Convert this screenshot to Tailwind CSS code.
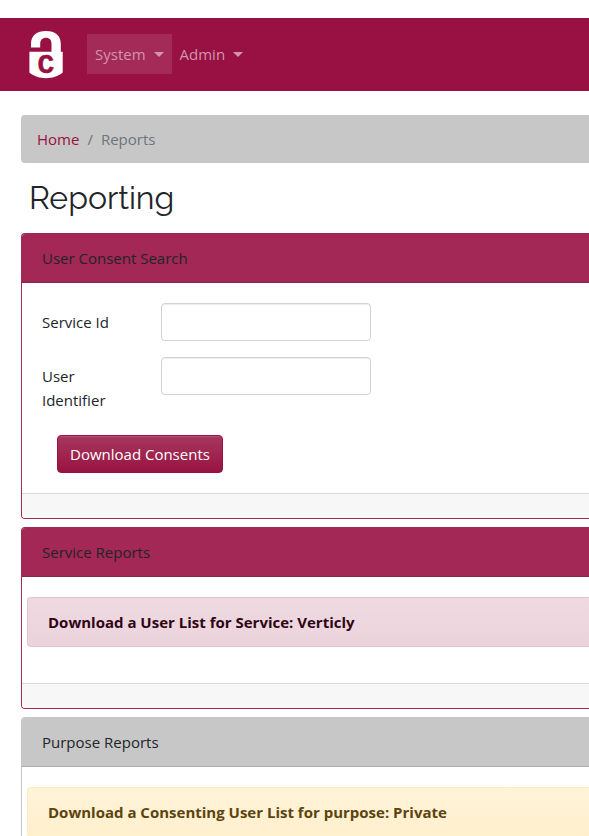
<!DOCTYPE html>
<html lang="en">
<head>
<meta charset="utf-8">
<meta name="viewport" content="width=device-width, initial-scale=1">
<title>Reporting</title>
<script src="https://cdn.jsdelivr.net/npm/@tailwindcss/browser@4"></script>
</head>
<body class="h-screen overflow-hidden bg-white pt-[18px] font-['Open_Sans','Noto_Sans',sans-serif] text-[15px] leading-6 text-[#212529]">
  <header class="flex items-center bg-[#981142] pt-3 pb-[13px] pl-[29px]">
    <a href="#" aria-label="Home" class="mr-6">
      <svg class="block h-12 w-[34px] overflow-visible" viewBox="0 -1 34 48" aria-hidden="true">
        <path fill="#fff" d="M2 16.500V13C2 4 8 0 17 0S31.800 4 31.800 13V20.800H33.700V41.500C29 45.500 23 47.200 17 47.200S5 45.500 .4 41.500V20.800H22.500V13C22.500 9 20.500 6.800 17 6.800S11.200 9 11.200 13V16.500Z"/>
        <text x="17" y="42" text-anchor="middle" fill="#981142" stroke="#981142" stroke-width=".4" font-family="'Liberation Mono',monospace" font-weight="700" font-size="28">C</text>
      </svg>
    </a>
    <nav class="flex text-[#d295ad]">
      <button class="flex items-center gap-2 bg-[#a42a57] px-2 py-2">System
        <svg class="h-[5px] w-[10px]" viewBox="0 0 10 5" aria-hidden="true"><path fill="currentColor" d="M0 0H10L5 5Z"/></svg>
      </button>
      <button class="flex items-center gap-2 px-2 py-2">Admin
        <svg class="h-[5px] w-[10px]" viewBox="0 0 10 5" aria-hidden="true"><path fill="currentColor" d="M0 0H10L5 5Z"/></svg>
      </button>
    </nav>
  </header>

  <main class="pt-6 pl-[21px]">
    <nav aria-label="Breadcrumb" class="rounded-l bg-[#c7c7c7] px-4 py-3">
      <ol class="flex gap-2 text-[#6c757d]">
        <li><a href="#" class="text-[#981142]">Home</a></li>
        <li aria-hidden="true">/</li>
        <li aria-current="page">Reports</li>
      </ol>
    </nav>
    <h1 class="pt-4 pb-4 pl-2 font-['Raleway','Lato',sans-serif] text-[32px] leading-[38px] font-normal">Reporting</h1>

    <div class="flex flex-col gap-2">
      <section class="overflow-hidden rounded-l border border-r-0 border-[#a32855]">
        <h2 class="border-b border-[#8c2149] bg-[#a32855] px-5 py-3">User Consent Search</h2>
        <form class="flex flex-col items-start gap-4 p-5">
          <div class="flex items-start">
            <label for="service" class="w-[119px] py-[7px] pr-[30px]">Service Id</label>
            <input id="service" type="text" class="h-[38px] w-[210px] rounded border border-[#ced4da] bg-white px-3 shadow-[inset_0_1px_1px_rgba(0,0,0,0.075)]">
          </div>
          <div class="flex items-start">
            <label for="user" class="w-[119px] py-[7px] pr-[30px]">User Identifier</label>
            <input id="user" type="text" class="h-[38px] w-[210px] rounded border border-[#ced4da] bg-white px-3 shadow-[inset_0_1px_1px_rgba(0,0,0,0.075)]">
          </div>
          <button type="button" class="ml-[15px] rounded border border-[#981142] bg-linear-to-b from-[#a7355e] to-[#981142] px-3 py-[6px] text-white shadow-[inset_0_1px_0_rgba(255,255,255,0.15)]">Download Consents</button>
        </form>
        <div class="h-[25px] border-t border-[#d9d9d9] bg-[#f7f7f7]"></div>
      </section>

      <section class="overflow-hidden rounded-l border border-r-0 border-[#a32855]">
        <h2 class="border-b border-[#8c2149] bg-[#a32855] px-5 py-3">Service Reports</h2>
        <div class="pt-5 pb-9 pl-[5px]">
          <a href="#" class="block rounded-l border border-r-0 border-[#e5c4d0] bg-linear-to-b from-[#efdae1] to-[#ebd3dc] px-5 py-3 font-bold text-[#2e0514]">Download a User List for Service: Verticly</a>
        </div>
        <div class="h-[25px] border-t border-[#d9d9d9] bg-[#f7f7f7]"></div>
      </section>

      <section class="overflow-hidden rounded-tl border border-r-0 border-b-0 border-[#c7c7c7]">
        <h2 class="border-b border-[#acacac] bg-[#c7c7c7] px-5 py-3">Purpose Reports</h2>
        <div class="pt-5 pl-[5px]">
          <a href="#" class="block rounded-l border border-r-0 border-[#ffeeba] bg-linear-to-b from-[#fff3d9] to-[#ffefcd] px-5 py-3 font-bold text-[#5c440e]">Download a Consenting User List for purpose: Private</a>
        </div>
      </section>
    </div>
  </main>
</body>
</html>
